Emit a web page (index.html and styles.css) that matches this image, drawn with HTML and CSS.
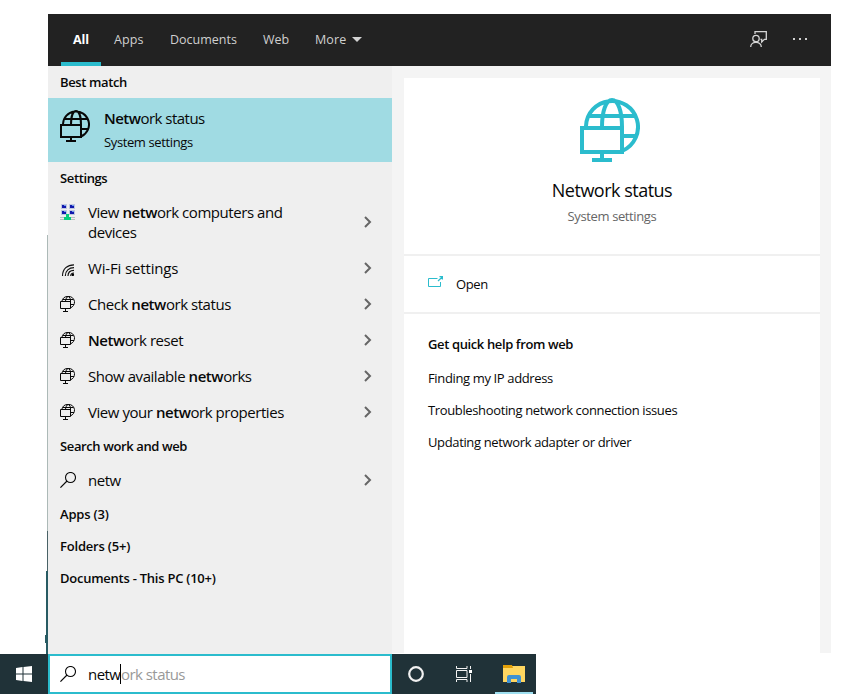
FILE: index.html
```html
<!DOCTYPE html>
<html lang="en">
<head>
<meta charset="utf-8">
<title>Search</title>
<link rel="stylesheet" href="styles.css">
</head>
<body>
<svg width="0" height="0" class="defs">
  <symbol id="net-small" viewBox="0 0 16 16"><path d="M1.800 5.500A6.500 6.500 0 0 1 14.500 5.500C14.700 8.500 13 11 10.500 11.800M3 3.500H13.500M10.500 8.500H14M5.500 5.500C5.500 3 7 .5 8.200 .5S11 3 10.500 6M.5 5.500H10.500V12.500H.5ZM5.500 12.500V15M3 15.500H8" fill="none" stroke="currentColor"/></symbol>
  <symbol id="chev" viewBox="0 0 8 12"><path d="M1 1L6 6L1 11" fill="none" stroke="#666" stroke-width="2"/></symbol>
  <symbol id="mag" viewBox="0 0 16 16"><circle cx="10.500" cy="5.500" r="5" fill="none" stroke="currentColor" stroke-width="1.100"/><path d="M7 9L.4 15.600" stroke="currentColor" stroke-width="1.200"/></symbol>
  <symbol id="net-large" viewBox="0 0 60 64"><g fill="none" stroke="currentColor" stroke-width="4"><path d="M6 29V28A26 26 0 1 1 43 52.500M9 18H55M43 38H56M22 29C22 13 26 2 32 2S42 13 42 29"/><path d="M2 30H42V54H2ZM22 54V62M12 62H32"/></g></symbol>
</svg>
<main class="search">
  <header class="top">
    <nav class="tabs">
      <span class="tab active">All</span><span class="tab apps">Apps</span><span class="tab docs">Documents</span><span class="tab web">Web</span><span class="tab more">More<i class="caret"></i></span>
    </nav>
    <svg class="feedback" viewBox="0 0 18 18"><g fill="none" stroke="#d5d5d5" stroke-width="1.300"><circle cx="6" cy="8.500" r="3.200"/><path d="M.7 17C.7 10.700 11.300 10.700 11.300 17M5 4V1.600H16.300V9.400H14.400L11.700 12V9.400H10.500"/></g></svg>
    <svg class="dots" viewBox="0 0 14 2"><path d="M0 0h2v2H0zM6 0h2v2H6zM12 0h2v2h-2z" fill="#d0d0d0"/></svg>
  </header>
  <div class="body">
    <section class="results">
      <h2>Best match</h2>
      <div class="best">
        <svg class="best-icon" viewBox="0 0 60 64"><use href="#net-large"/></svg>
        <div><p class="best-name"><b>Netw</b>ork status</p><p class="best-sub">System settings</p></div>
      </div>
      <h2>Settings</h2>
      <div class="row two">
        <svg class="ico" viewBox="0 0 16 16"><path d="M1 0h6v5H1zM9 0h6v5H9zM1 6h6v5H1zM9 6h6v5H9z" fill="#bfc7df"/><path d="M2 1h4v3H2zM10 1h4v3h-4zM2 7h4v3H2zM10 7h4v3h-4z" fill="#1118ad"/><path d="M4 1h2v1H4zM12 1h2v1h-2zM4 7h2v1H4zM12 7h2v1h-2z" fill="#6d9bea"/><path d="M0 13h15v1H0zM0 15h15v1H0z" fill="#b8c0c0"/><path d="M6 10h3v3h2v3H4v-3h2z" fill="#08cb7b"/></svg>
        <span class="label">View <b>netw</b>ork computers and<br>devices</span><svg class="chev"><use href="#chev"/></svg></div>
      <div class="row"><svg class="ico" viewBox="0 0 16 16"><g fill="none" stroke="#111" stroke-width="1.150"><path d="M2.500 16C2.500 8.500 7.500 4.800 14 4.800M5.300 16C5.300 11 9 7.600 14 7.600M8 16C8 12.500 10.500 10.300 14 10.300M10.700 16C10.700 14 12 13 14 13"/></g><circle cx="12.800" cy="14.800" r="1.300" fill="#000"/></svg><span class="label wifi">Wi-Fi settings</span><svg class="chev"><use href="#chev"/></svg></div>
      <div class="row"><svg class="ico"><use href="#net-small"/></svg><span class="label">Check <b>netw</b>ork status</span><svg class="chev"><use href="#chev"/></svg></div>
      <div class="row"><svg class="ico"><use href="#net-small"/></svg><span class="label"><b>Netw</b>ork reset</span><svg class="chev"><use href="#chev"/></svg></div>
      <div class="row"><svg class="ico"><use href="#net-small"/></svg><span class="label">Show available <b>netw</b>orks</span><svg class="chev"><use href="#chev"/></svg></div>
      <div class="row"><svg class="ico"><use href="#net-small"/></svg><span class="label">View your <b>netw</b>ork properties</span><svg class="chev"><use href="#chev"/></svg></div>
      <h2>Search work and web</h2>
      <div class="row"><svg class="ico"><use href="#mag"/></svg><span class="label">netw</span><svg class="chev"><use href="#chev"/></svg></div>
      <h2 class="count">Apps (3)</h2><h2 class="count">Folders (5+)</h2><h2 class="pc">Documents - This PC (10+)</h2>
    </section>
    <section class="detail">
      <div class="hero"><svg class="hero-icon"><use href="#net-large"/></svg><h1>Network status</h1><p>System settings</p></div>
      <div class="open"><svg viewBox="0 0 16 12"><path d="M9.500 2.500H.5V10.500H12.500V6" fill="none" stroke="#2bbccd"/><path d="M10 5L14.500 .7M11.500 .6H14.400V3.500" fill="none" stroke="#2bbccd" stroke-width="1.200"/></svg><span>Open</span></div>
      <div class="help"><h3>Get quick help from web</h3><p>Finding my IP address</p><p>Troubleshooting network connection issues</p><p>Updating network adapter or driver</p></div>
    </section>
  </div>
</main>
<footer class="taskbar">
  <div class="start"><svg viewBox="0 0 16 16"><path d="M0 2L6.500 1V7.500H0ZM7.500 .9L16 0V7.500H7.500ZM0 8.500H6.500V15L0 14ZM7.500 8.500H16V16L7.500 15Z" fill="#fff"/></svg></div>
  <div class="input"><svg class="input-icon"><use href="#mag"/></svg><span class="typed">netw</span><i class="cursor"></i><span class="hint">ork status</span></div>
  <div class="pinned">
    <svg class="cortana" viewBox="0 0 16 16"><circle cx="8" cy="8" r="6.800" fill="none" stroke="#f1f1f1" stroke-width="2.200"/></svg>
    <svg class="tasks" viewBox="0 0 17 16"><path d="M.5 0V2.500H11V0M.5 4.500H11V11.500H.5ZM.5 16V13.500H11V16M14.500 0V3M14.500 8V16" fill="none" stroke="#f4f4f4"/><path d="M13 4h3v3h-3z" fill="#fff"/></svg>
    <svg class="folder" viewBox="0 0 22 18"><path d="M0 1H22V17H0Z" fill="#ffd660"/><path d="M0 0H9L10 3H0Z" fill="#e29f08"/><path d="M4 18V12Q4 10 6 10H16Q18 10 18 12V18H14V14H8V18Z" fill="#3f91d2"/></svg>
    <i class="running"></i>
  </div>
</footer>
<svg class="edge" viewBox="0 0 3 419"><path d="M2 0h1v296H2z" fill="#acb9b7"/><path d="M2 296h1v40H2z" fill="#496266"/><path d="M1 336h2v83H1z" fill="#285b63"/><path d="M0 400h1v8H0z" fill="#285b63"/></svg>
</body>
</html>
```

FILE: styles.css
```css
* { box-sizing: border-box; }
body { margin: 0; width: 854px; height: 694px; overflow: hidden; background: #fff; font: 13px/20px "Open Sans", "Noto Sans", sans-serif; letter-spacing: -.38px; color: #080808; }
h1, h2, h3, p { margin: 0; }
b { font-weight: 600; }
svg { display: block; flex: none; }
.defs { position: absolute; }
.search { width: 783px; height: 654px; margin-left: 48px; padding-top: 14px; }
.top { height: 52px; background: #222; display: flex; align-items: center; color: #d0d0d0; font-size: 12.500px; letter-spacing: 0; }
.tabs { display: flex; height: 52px; flex: 1; padding-left: 13px; }
.tab { line-height: 51px; white-space: nowrap; }
.active { width: 40px; margin-right: 13px; text-align: center; color: #fff; font-weight: 700; border-bottom: 4px solid #2bbccd; letter-spacing: -.1px; }
.apps { width: 56px; letter-spacing: .1px; }
.docs { width: 93px; }
.web { width: 52px; }
.more { display: flex; align-items: center; height: 51px; letter-spacing: .1px; }
.caret { border: 5px solid transparent; border-top-color: #d4d4d4; border-bottom: 0; margin-left: 6px; }
.feedback { width: 18px; height: 18px; margin: 0 25px 2px 0; }
.dots { width: 14px; height: 2px; margin: 0 24px 2px 0; }
.body { display: flex; height: 588px; }
.results { width: 344px; background: #efefef; }
h2 { height: 32px; padding-left: 12px; line-height: 33px; font-size: 13px; font-weight: 600; }
.count { letter-spacing: -.2px; }
.pc { letter-spacing: -.25px; }
.best { display: flex; height: 64px; background: #a0dbe3; padding: 11px 0 0 12px; }
.best-icon { width: 30px; height: 32px; margin: 1px 14px 0 0; }
.best-name { font-size: 15px; line-height: 18px; letter-spacing: -.52px; }
.best-sub { margin-top: 5px; }
.row { height: 36px; display: flex; align-items: center; padding: 0 20px 0 12px; font-size: 15px; letter-spacing: -.45px; }
.row.two { height: 56px; }
.two .ico { align-self: flex-start; margin-top: 10px; }
.ico { width: 16px; height: 16px; margin-right: 12px; }
.label { flex: 1; padding-bottom: 1px; }
.wifi { letter-spacing: -.15px; }
.chev { width: 8px; height: 12px; }
.detail { width: 439px; height: 587px; border: 12px solid #f4f4f4; border-right-width: 11px; border-bottom: 0; background: #fff; }
.hero { height: 178px; padding-top: 20px; text-align: center; border-bottom: 2px solid #f0f0f0; }
.hero-icon { width: 60px; height: 64px; margin-left: 176px; color: #2bbccd; }
h1 { font-size: 18px; line-height: 26px; margin-top: 15px; font-weight: 400; letter-spacing: -.5px; }
.hero p { color: #666; margin-top: 3px; }
.open { height: 58px; display: flex; align-items: center; padding-left: 24px; border-bottom: 2px solid #f0f0f0; }
.open svg { width: 16px; height: 12px; margin-right: 12px; margin-bottom: 4px; }
.help { padding: 20px 24px; }
h3 { font-size: 13px; line-height: 20px; font-weight: 600; margin-bottom: 14px; }
.help p { margin-bottom: 12px; letter-spacing: -.36px; }
.taskbar { display: flex; width: 536px; height: 40px; background: #203238; }
.start { width: 48px; padding: 12px 16px; }
.start svg { width: 16px; height: 16px; }
.input { width: 344px; border: 2px solid #2bbccd; background: #fff; display: flex; align-items: center; padding-left: 10px; font-size: 15px; letter-spacing: -.55px; }
.input-icon { width: 16px; height: 16px; margin-right: 12px; }
.typed { width: 32px; }
.typed, .hint { padding-bottom: 1px; }
.cursor { width: 1px; height: 20px; background: #000; }
.hint { color: #999; }
.pinned { width: 144px; display: flex; align-items: center; padding-left: 16px; position: relative; }
.cortana { width: 16px; height: 16px; margin-right: 32px; }
.tasks { width: 17px; height: 16px; margin-right: 30px; }
.folder { width: 22px; height: 18px; }
.running { position: absolute; left: 103px; bottom: 0; width: 38px; height: 2px; background: #9edff0; }
.edge { position: absolute; left: 45px; top: 235px; width: 3px; height: 419px; }
```
